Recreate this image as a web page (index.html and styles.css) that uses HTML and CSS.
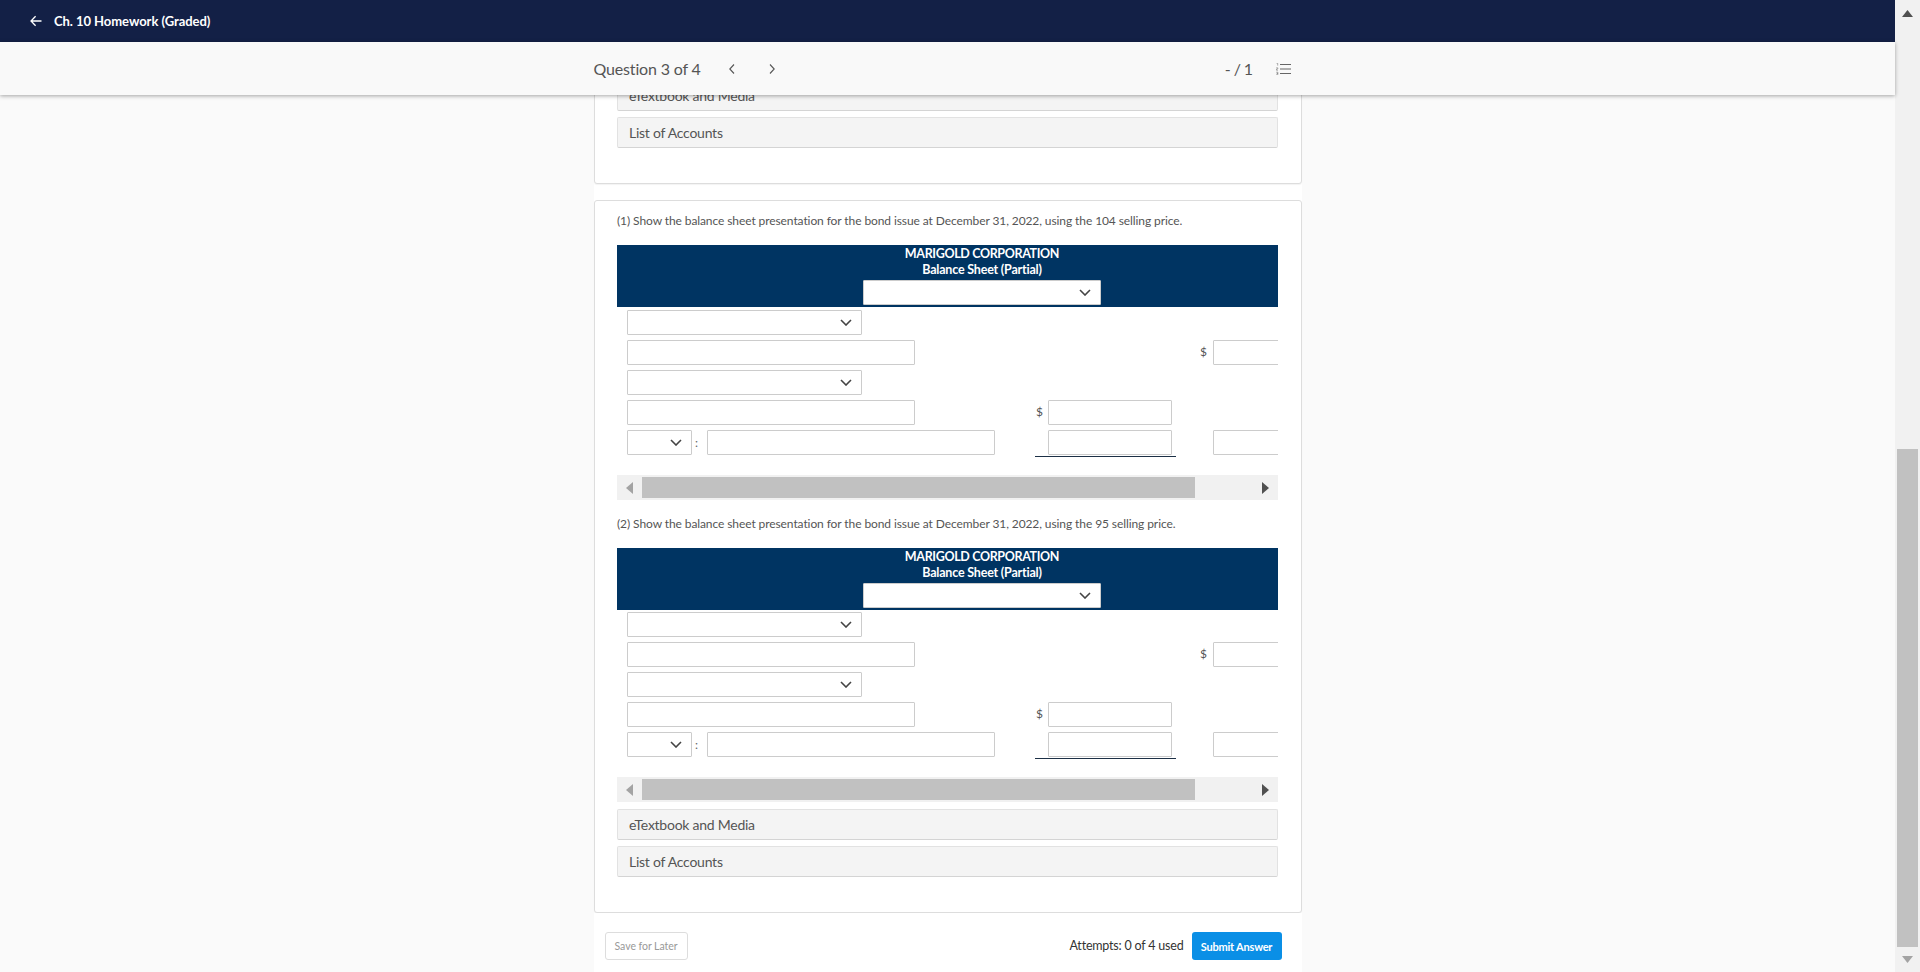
FILE: index.html
```html
<!DOCTYPE html>
<html lang="en">
<head>
<meta charset="utf-8">
<title>Ch. 10 Homework (Graded)</title>
<link rel="stylesheet" href="styles.css">
</head>
<body>
<div class="shell">
  <div class="app">
    <header class="topbar">
      <svg class="back-icon" viewBox="0 0 12 12" width="12" height="12" aria-hidden="true"><path d="M11.5 6H1M5.6 1.2 1 6l4.6 4.8" fill="none" stroke="#fff" stroke-width="1.3"/></svg>
      <span class="topbar-title">Ch. 10 Homework (Graded)</span>
    </header>
    <nav class="subbar">
      <div class="subbar-inner">
        <span class="q-count">Question 3 of 4</span>
        <svg class="chev chev-prev" viewBox="0 0 8 12" width="8" height="12" aria-hidden="true"><path d="M6 1.5 1.8 6 6 10.5" fill="none" stroke="#555" stroke-width="1.1"/></svg>
        <svg class="chev chev-next" viewBox="0 0 8 12" width="8" height="12" aria-hidden="true"><path d="M2 1.5 6.2 6 2 10.5" fill="none" stroke="#555" stroke-width="1.1"/></svg>
        <span class="score">- / 1</span>
        <svg class="list-icon" viewBox="0 0 15 12" width="15" height="12" aria-hidden="true"><path d="M4 1.5h11M4 6h11M4 10.5h11" stroke="#666" stroke-width="1.2"/><path d="M.5.2h1.2v2.4M.2 4.8h1.6v1.2H.4v1.2h1.6M.2 9.2h1.7v1.2H.8h1.1v1.3H.2" fill="none" stroke="#777" stroke-width=".6"/></svg>
      </div>
    </nav>
    <main class="main">
      <div class="column">
        <section class="card card-clipped">
          <div class="resource">eTextbook and Media</div>
          <div class="resource">List of Accounts</div>
        </section>
        <section class="card card-parts">
          <p class="prompt">(1) Show the balance sheet presentation for the bond issue at December 31, 2022, using the 104 selling price.</p>
          <div class="sheet">
            <div class="sheet-head">
              <div class="sheet-title">MARIGOLD CORPORATION</div>
              <div class="sheet-title sheet-subtitle">Balance Sheet (Partial)</div>
              <select class="sel sel-head"><option></option></select>
            </div>
            <div class="sheet-body">
              <div class="sheet-grid">
                <div class="cell-a"><select class="sel sel-wide"><option></option></select></div><div></div><div></div>
                <div class="cell-a"><input class="inp inp-wide"></div><div></div><div class="cell-c"><span class="cur">$</span><input class="inp inp-num"></div>
                <div class="cell-a"><select class="sel sel-wide"><option></option></select></div><div></div><div></div>
                <div class="cell-a"><input class="inp inp-wide"></div><div class="cell-b"><span class="cur">$</span><input class="inp inp-num"></div><div></div>
                <div class="cell-a"><select class="sel sel-small"><option></option></select><span class="colon">:</span><input class="inp inp-wide"></div><div class="cell-b cell-total"><input class="inp inp-num"></div><div class="cell-c cell-pad"><input class="inp inp-num"></div>
              </div>
            </div>
            <div class="hscroll">
              <svg class="hs-arrow" viewBox="0 0 7 12" width="7" height="12" aria-hidden="true"><path d="M7 0v12L0 6z" fill="#a3a3a3"/></svg>
              <div class="hs-thumb"></div>
              <svg class="hs-arrow hs-next" viewBox="0 0 7 12" width="7" height="12" aria-hidden="true"><path d="M0 0v12l7-6z" fill="#505050"/></svg>
            </div>
          </div>
          <p class="prompt prompt-next">(2) Show the balance sheet presentation for the bond issue at December 31, 2022, using the 95 selling price.</p>
          <div class="sheet sheet-next">
            <div class="sheet-head">
              <div class="sheet-title">MARIGOLD CORPORATION</div>
              <div class="sheet-title sheet-subtitle">Balance Sheet (Partial)</div>
              <select class="sel sel-head"><option></option></select>
            </div>
            <div class="sheet-body">
              <div class="sheet-grid">
                <div class="cell-a"><select class="sel sel-wide"><option></option></select></div><div></div><div></div>
                <div class="cell-a"><input class="inp inp-wide"></div><div></div><div class="cell-c"><span class="cur">$</span><input class="inp inp-num"></div>
                <div class="cell-a"><select class="sel sel-wide"><option></option></select></div><div></div><div></div>
                <div class="cell-a"><input class="inp inp-wide"></div><div class="cell-b"><span class="cur">$</span><input class="inp inp-num"></div><div></div>
                <div class="cell-a"><select class="sel sel-small"><option></option></select><span class="colon">:</span><input class="inp inp-wide"></div><div class="cell-b cell-total"><input class="inp inp-num"></div><div class="cell-c cell-pad"><input class="inp inp-num"></div>
              </div>
            </div>
            <div class="hscroll">
              <svg class="hs-arrow" viewBox="0 0 7 12" width="7" height="12" aria-hidden="true"><path d="M7 0v12L0 6z" fill="#a3a3a3"/></svg>
              <div class="hs-thumb"></div>
              <svg class="hs-arrow hs-next" viewBox="0 0 7 12" width="7" height="12" aria-hidden="true"><path d="M0 0v12l7-6z" fill="#505050"/></svg>
            </div>
          </div>
          <div class="resources-end">
            <div class="resource">eTextbook and Media</div>
            <div class="resource">List of Accounts</div>
          </div>
        </section>
        <footer class="actions">
          <button class="btn-save">Save for Later</button>
          <span class="attempts">Attempts: 0 of 4 used</span>
          <button class="btn-submit">Submit Answer</button>
        </footer>
      </div>
    </main>
  </div>
  <aside class="vscroll">
    <svg class="vs-arrow" viewBox="0 0 11 7" width="11" height="7" aria-hidden="true"><path d="M5.5 0 11 7H0z" fill="#505050"/></svg>
    <div class="vs-space"></div>
    <div class="vs-thumb"></div>
    <svg class="vs-arrow vs-down" viewBox="0 0 11 7" width="11" height="7" aria-hidden="true"><path d="M5.5 7 11 0H0z" fill="#a3a3a3"/></svg>
  </aside>
</div>
</body>
</html>
```

FILE: styles.css
```css
* { box-sizing: border-box; }
html, body { margin: 0; height: 100%; overflow: hidden; }
body { font-family: Lato, "Liberation Sans", sans-serif; color: #444; background: #fafafa; }
.shell { display: flex; height: 972px; }
.app { flex: 1; min-width: 0; display: flex; flex-direction: column; }

.topbar { height: 42px; flex: none; background: #132046; display: flex; align-items: center; padding-left: 30px; gap: 12px; color: #fff; }
.topbar-title { font-size: 13px; letter-spacing: -.05px; font-weight: 700; }

.subbar { height: 53px; flex: none; background: #f9f9f9; box-shadow: 0 1px 4px rgba(0,0,0,.35); position: relative; z-index: 2; }
.subbar-inner { width: 708px; height: 100%; margin: 0 auto; display: flex; align-items: center; color: #555; }
.q-count { font-size: 16px; letter-spacing: -.16px; width: 134px; }
.chev-next { margin-left: 32px; }
.score { font-size: 16px; letter-spacing: -.6px; margin-left: auto; margin-right: 23px; }
.list-icon { margin-right: 11px; }

.main { flex: 1; min-height: 0; overflow: hidden; }
.column { width: 708px; margin: 0 auto; background: #fff; height: 100%; }
.card { background: #fff; border: 1px solid #ddd; border-radius: 3px; box-shadow: 0 1px 1px rgba(0,0,0,.05); padding: 0 23px 0 22.5px; }
.card-clipped { margin-top: -16px; padding-bottom: 35px; display: flex; flex-direction: column; gap: 6px; }
.card-parts { margin-top: 16px; padding-top: 12px; padding-bottom: 35px; }

.resource { height: 31px; background: #f4f4f4; border: 1px solid #e2e2e2; border-bottom-color: #d4d4d4; border-radius: 2px; font-size: 14px; letter-spacing: -.25px; line-height: 29px; padding-left: 11px; color: #555; }
.prompt { margin: 0; font-size: 12px; letter-spacing: -.09px; line-height: 16px; color: #555; }
.prompt-next { margin-top: 16px; }

.sheet { margin-top: 16px; }
.sheet-head { height: 62px; background: #003462; text-align: center; color: #fff; padding-top: 1px; }
.sheet-title { font-size: 12.5px; font-weight: 700; letter-spacing: -.35px; line-height: 16px; width: 730px; }
.sheet-subtitle { letter-spacing: -.2px; }
.sheet-head .sel-head { display: block; width: 238px; margin: 2px 0 0 246px; }
.sheet-body { overflow: hidden; height: 168px; padding-top: 3px; }
.sheet-next .sheet-body { height: 167px; padding-top: 2px; }
.sheet-grid { width: 735px; display: grid; grid-template-columns: 418px 141px 176px; grid-auto-rows: 25px; row-gap: 5px; }
.cell-a { padding-left: 10px; display: flex; align-items: center; }
.cell-b { padding-left: 1px; display: flex; align-items: center; }
.cell-total { padding-left: 13px; border-bottom: 1px solid #1c3046; height: 27px; align-items: flex-start; }
.cell-c { padding-left: 24px; display: flex; align-items: center; }
.cell-pad { padding-left: 37px; }
.cur { font-size: 12px; width: 12px; flex: none; color: #555; margin-top: -3px; }
.cell-c .cur { width: 13px; }
.colon { font-size: 12px; width: 15px; flex: none; padding-left: 3px; color: #666; }

.sel, .inp { height: 25px; border: 1px solid #ccc; background-color: #fff; border-radius: 1px; font-family: inherit; font-size: 13px; padding: 0; margin: 0; flex: none; outline: none; }
.sel { appearance: none; -webkit-appearance: none; background-repeat: no-repeat; background-position: right 9px center; background-size: 12px 7px; background-image: url("data:image/svg+xml,%3Csvg xmlns='http://www.w3.org/2000/svg' viewBox='0 0 12 7'%3E%3Cpath d='M1 1l5 5 5-5' fill='none' stroke='%23444' stroke-width='1.6'/%3E%3C/svg%3E"); }
.sel-wide { width: 235px; }
.sel-small { width: 65px; }
.inp-wide { width: 288px; }
.inp-num { width: 124px; }

.hscroll { height: 25px; background: #f1f1f1; display: flex; align-items: center; padding: 0 9px; }
.hs-thumb { width: 553px; height: 21px; background: #c1c1c1; margin-left: 9px; }
.hs-next { margin-left: auto; }

.resources-end { margin-top: 7px; display: flex; flex-direction: column; gap: 6px; }

.actions { height: 66px; background: #fff; display: flex; align-items: flex-start; padding: 19px 20px 0 11px; }
.btn-save { width: 83px; height: 28px; background: #fff; border: 1px solid #ddd; border-radius: 3px; font-family: inherit; font-size: 10.5px; letter-spacing: -.05px; color: #999; padding: 0; }
.attempts { margin-left: auto; font-size: 12.5px; letter-spacing: -.2px; line-height: 28px; color: #333; margin-right: 8px; }
.btn-submit { width: 90px; height: 28px; background: #0a8fe6; border: 0; border-radius: 3px; font-family: inherit; font-size: 11px; font-weight: 700; letter-spacing: -.2px; color: #fff; padding: 0; }

.vscroll { width: 25px; flex: none; background: #f1f1f1; display: flex; flex-direction: column; align-items: center; }
.vs-arrow { margin-top: 10px; flex: none; }
.vs-space { flex: 1; }
.vs-thumb { width: 21px; height: 498px; flex: none; background: #c1c1c1; }
.vs-down { margin: 9px 0 9px; }
```
